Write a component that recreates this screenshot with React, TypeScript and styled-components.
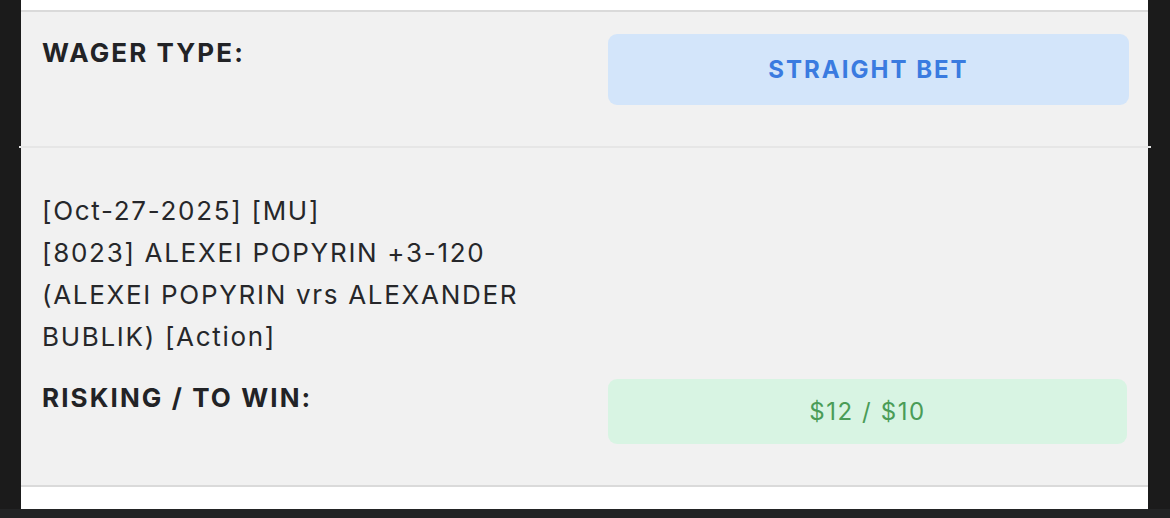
import React from "react";
import styled, { createGlobalStyle } from "styled-components";

const Global = createGlobalStyle`
  html, body { margin: 0; padding: 0; }
  body {
    background: #1b1b1b;
    font-family: Inter, "Noto Sans", "Liberation Sans", sans-serif;
    height: 518px;
    overflow: hidden;
  }
`;

const Page = styled.div`
  display: flex;
  flex-direction: column;
  height: 518px;
  background: linear-gradient(to bottom, #1b1b1b 0, #1b1b1b 509px, #232425 509px);
`;

const Panel = styled.div`
  margin: 0 22px 0 21px;
  background: #ffffff;
  padding: 10px 0 22px;
  display: flex;
  flex-direction: column;
`;

const Section = styled.section<{ $top: number; $bottom: number; $edge?: string }>`
  background: #f1f1f1;
  padding: ${(p) => p.$top}px 19px ${(p) => p.$bottom}px 21px;
  ${(p) => (p.$edge ? `border-${p.$edge}: 2px solid #dadada;` : "")}
  display: flex;
  flex-direction: column;
  gap: 21px;
`;

const Divider = styled.div`
  height: 2px;
  margin: 0 -3px 0 -2px;
  background: #e6e6e6;
`;

const Row = styled.div`
  display: grid;
  grid-template-columns: 1fr 1fr;
  column-gap: 45px;
  align-items: start;
`;

const Label = styled.div`
  font-size: 26px;
  font-weight: 700;
  letter-spacing: 2.1px;
  color: #222326;
  line-height: 36px;
  padding-top: 1px;
`;

const Pill = styled.div<{ $tone: "blue" | "green" }>`
  display: flex;
  align-items: center;
  justify-content: center;
  border-radius: 9px;
  height: ${(p) => (p.$tone === "blue" ? 71 : 65)}px;
  background: ${(p) => (p.$tone === "blue" ? "#d3e5fa" : "#d8f4e3")};
  color: ${(p) => (p.$tone === "blue" ? "#3a7be0" : "#4a9c57")};
  font-size: 24px;
  font-weight: ${(p) => (p.$tone === "blue" ? 700 : 400)};
  letter-spacing: ${(p) => (p.$tone === "blue" ? "2px" : "1.6px")};
  margin-right: ${(p) => (p.$tone === "blue" ? 0 : 2)}px;
`;

const Description = styled.div`
  font-size: 26px;
  line-height: 42px;
  letter-spacing: 1.7px;
  color: #26272a;
  font-weight: 400;
  width: 521px;
`;

export default function App() {
  return (
    <Page>
      <Global />
      <Panel>
        <Section $top={22} $bottom={41} $edge="top">
          <Row>
            <Label>WAGER TYPE:</Label>
            <Pill $tone="blue">STRAIGHT BET</Pill>
          </Row>
        </Section>
        <Divider />
        <Section $top={42} $bottom={41} $edge="bottom">
          <Description>
            [Oct-27-2025] [MU]
            <br />
            [8023] ALEXEI POPYRIN +3-120
            <br />
            (ALEXEI POPYRIN vrs ALEXANDER BUBLIK) [Action]
          </Description>
          <Row>
            <Label>RISKING / TO WIN:</Label>
            <Pill $tone="green">$12 / $10</Pill>
          </Row>
        </Section>
      </Panel>
    </Page>
  );
}
